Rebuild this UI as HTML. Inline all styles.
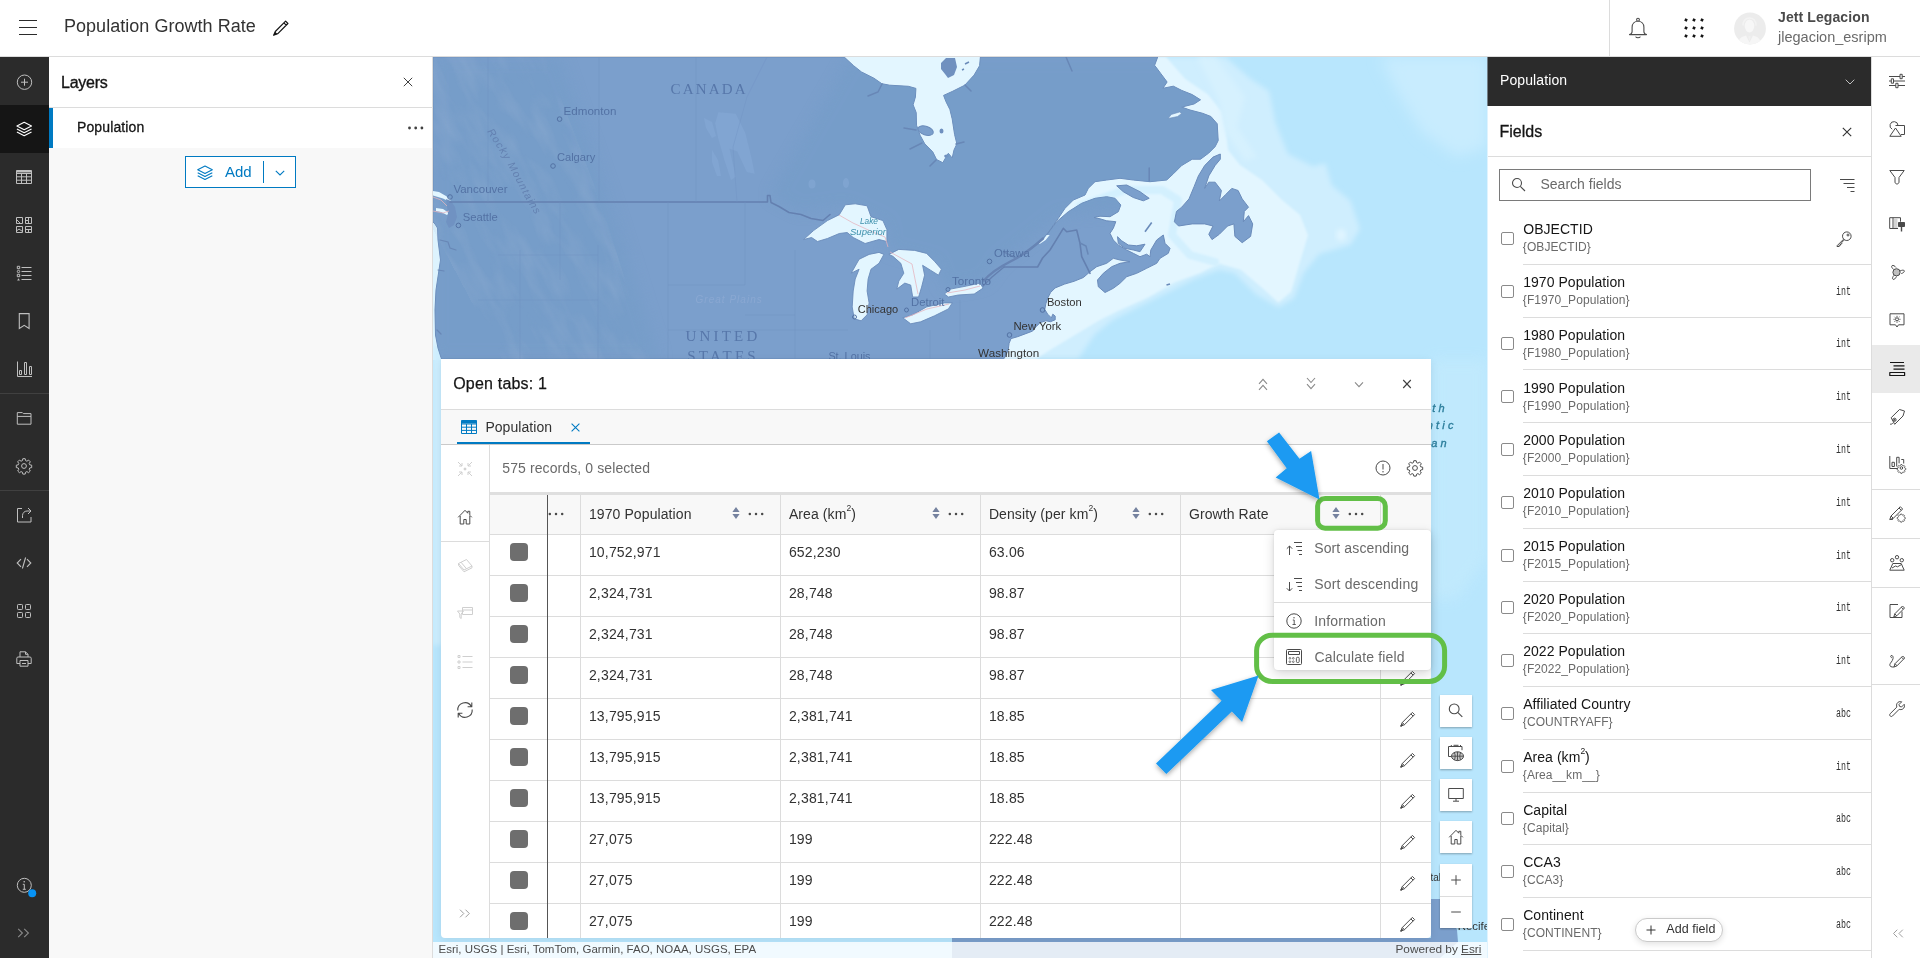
<!DOCTYPE html>
<html lang="en"><head><meta charset="utf-8"><title>Population Growth Rate</title>
<style>
*{box-sizing:border-box;margin:0;padding:0}
html,body{width:1920px;height:958px;overflow:hidden;background:#fff}
body{font-family:"Liberation Sans",sans-serif;color:#151515;font-size:14px;position:relative;will-change:transform}
.abs{position:absolute}
svg{display:block;overflow:visible}
.t{position:absolute;white-space:nowrap;line-height:1}
#hdr{position:absolute;left:0;top:0;width:1920px;height:57px;background:#fff;border-bottom:1px solid #dcdcdc}
#lrail{position:absolute;left:0;top:57px;width:49px;height:901px;background:#2b2b2b}
#lrail .act{position:absolute;left:0;top:48px;width:49px;height:48px;background:#151515}
#lrail .sep{position:absolute;left:0;width:49px;height:1px;background:#404040}
.ic{position:absolute;width:16px;height:16px}
.ic svg{width:16px;height:16px}
#layers{position:absolute;left:49px;top:57px;width:384px;height:901px;background:#f8f8f8;border-right:1px solid #dcdcdc}
#map{position:absolute;left:433px;top:57px;width:1054px;height:901px;background:#b7e4fb;overflow:hidden}
#rpanel{position:absolute;left:1487px;top:57px;width:384px;height:901px;background:#fff;overflow:hidden}
#rrail{position:absolute;left:1871px;top:57px;width:49px;height:901px;background:#fff;border-left:1px solid #dcdcdc}
#tbl{position:absolute;left:441px;top:359px;width:990px;height:579px;background:#fff;border-radius:0 0 4px 4px;overflow:hidden;box-shadow:0 2px 8px rgba(0,0,0,.08)}
</style></head><body>
<div id="hdr">
 <svg class="abs" style="left:19px;top:20px" width="18" height="15" viewBox="0 0 18 15"><path d="M0 .5h18M0 7.5h18M0 14.5h18" stroke="#2b2b2b" stroke-width="1" fill="none"/></svg>
 <div class="t" style="left:64px;top:17px;font-size:18px;color:#323232;letter-spacing:.03px">Population Growth Rate</div>
 <svg class="abs" style="left:272.500px;top:20.300px" width="16" height="16" viewBox="0 0 16 16"><path d="M.7 15.300l1.600-3.800L12.600 1.200l2.300 2.300L4.600 13.800zM10.900 2.900l2.300 2.300" fill="none" stroke="#151515" stroke-width="1.200" stroke-linejoin="round"/><path d="M.7 15.300l1.500-3.600 2.200 2.200z" fill="#151515"/></svg>
 <div class="abs" style="left:1609px;top:0;width:1px;height:56px;background:#dcdcdc"></div>
 <svg class="abs" style="left:1628px;top:17px" width="20" height="23" viewBox="0 0 20 23"><path d="M10 1.300a1.400 1.400 0 1 0 0 2.800a1.400 1.400 0 1 0 0-2.800zM1.500 17.600c1.700-.5 2.600-1.600 2.600-3.200V10.300C4.100 6.600 6.700 4.200 10 4.200s5.900 2.400 5.900 6.100v4.100c0 1.600.9 2.700 2.600 3.200zM7.900 20c.6.900 3.600.9 4.200 0" fill="none" stroke="#4a4a4a" stroke-width="1.100" stroke-linecap="round" stroke-linejoin="round"/></svg>
 <svg class="abs" style="left:1684px;top:18px" width="20" height="20" viewBox="0 0 20 20" fill="#151515"><rect x="0.6499999999999999" y="0.6499999999999999" width="2.700" height="2.700" transform="rotate(22 2 2)"/><rect x="8.65" y="0.6499999999999999" width="2.700" height="2.700" transform="rotate(22 10 2)"/><rect x="16.65" y="0.6499999999999999" width="2.700" height="2.700" transform="rotate(22 18 2)"/><rect x="0.6499999999999999" y="8.65" width="2.700" height="2.700" transform="rotate(22 2 10)"/><rect x="8.65" y="8.65" width="2.700" height="2.700" transform="rotate(22 10 10)"/><rect x="16.65" y="8.65" width="2.700" height="2.700" transform="rotate(22 18 10)"/><rect x="0.6499999999999999" y="16.65" width="2.700" height="2.700" transform="rotate(22 2 18)"/><rect x="8.65" y="16.65" width="2.700" height="2.700" transform="rotate(22 10 18)"/><rect x="16.65" y="16.65" width="2.700" height="2.700" transform="rotate(22 18 18)"/></svg>
 <svg class="abs" style="left:1733px;top:12px" width="33" height="33" viewBox="0 0 33 33"><defs><clipPath id="av"><circle cx="17" cy="16.500" r="15.900"/></clipPath></defs><circle cx="17" cy="16.500" r="15.900" fill="#ececec"/><g clip-path="url(#av)"><path d="M10 13.500c0-5 3-7.500 6.500-7.500s6.500 2.500 6.500 7.500" fill="none" stroke="#f3f3f3" stroke-width="1.600"/><ellipse cx="16.500" cy="14" rx="4.800" ry="6.500" fill="#f7f7f7"/><path d="M5 34c0-8 4-9.500 8-10.500l3.500 7 3.500-7c4 1 8 2.500 8 10.500z" fill="#f6f6f6"/><path d="M15.300 24h2.400l-1.200 6z" fill="#f0f0f0"/></g></svg>
 <div class="t" style="left:1778px;top:10px;font-size:14px;font-weight:700;color:#4a4a4a;letter-spacing:.1px">Jett Legacion</div>
 <div class="t" style="left:1778px;top:30px;font-size:14.500px;color:#6a6a6a">jlegacion_esripm</div>
</div>
<div id="lrail">
 <div class="act"></div>
 <div class="sep" style="top:336px"></div>
 <div class="sep" style="top:433px"></div>
 
 <!-- plus circle cy=81 -->
 <svg class="abs" style="left:16px;top:17px" width="16" height="16" viewBox="0 0 16 16" fill="none" stroke="#bfbfbf" stroke-width="1"><circle cx="8.500" cy="8.200" r="7.200"/><path d="M8.500 4.700v7M5 8.200h7"/></svg>
 <!-- layers cy=129 -->
 <svg class="abs" style="left:16px;top:64px" width="16" height="16" viewBox="0 0 16 16" fill="none" stroke="#fff" stroke-width="1.100" stroke-linejoin="round"><path d="M8.200 1.300L15.500 5L8.200 8.700L.9 5z"/><path d="M.9 8l7.300 3.700L15.500 8M.9 11l7.300 3.700L15.500 11"/></svg>
 <!-- table cy=177 -->
 <svg class="abs" style="left:16px;top:112px" width="16" height="16" viewBox="0 0 16 16" fill="none" stroke="#bfbfbf" stroke-width="1"><path d="M.5 1.500h15v13H.5zM.5 4.500h15M.5 7.800h15M.5 11.200h15M5.500 4.500v10M10.500 4.500v10"/><path d="M.5 2.500h15" stroke-width="2"/></svg>
 <!-- basemap cy=225 -->
 <svg class="abs" style="left:16px;top:160px" width="16" height="16" viewBox="0 0 16 16" fill="none" stroke="#bfbfbf" stroke-width="1"><path d="M.5.500h6v6h-6zM9.500.500h6v6h-6zM.5 9.500h6v6h-6zM9.500 9.500h6v6h-6z"/><path d="M.5 2.500l4 4M9.500 3.500h3v-3M12.500 3.500v3M.5 14l2.500-2 3.500 2.500M9.500 12.500h6M12.500 12.500v3"/></svg>
 <!-- legend cy=273 -->
 <svg class="abs" style="left:16px;top:208px" width="16" height="16" viewBox="0 0 16 16" fill="none" stroke="#bfbfbf" stroke-width="1"><path d="M5.500 2.500h10M5.500 6.500h10M5.500 10.500h10M5.500 14.500h10"/><path d="M1.300 1.300h2.400v2.400H1.300zM1.300 9.300h2.400v2.400H1.300z"/><circle cx="2.500" cy="6.500" r="1.200"/><path d="M2.500 13.200l1.400 2.200H1.100z" fill="#bfbfbf" stroke="none"/></svg>
 <!-- bookmark cy=321 -->
 <svg class="abs" style="left:16px;top:256px" width="16" height="16" viewBox="0 0 16 16" fill="none" stroke="#bfbfbf" stroke-width="1.100"><path d="M3.300.6h9.800v14.800L8.200 12.300 3.300 15.400z"/></svg>
 <!-- chart cy=369 -->
 <svg class="abs" style="left:16px;top:304px" width="16" height="16" viewBox="0 0 16 16" fill="none" stroke="#bfbfbf" stroke-width="1"><path d="M1.500.5v15h14.500M3.500 13.500v-4h2v4zM8.500 13.500v-12h2v12zM13.500 13.500v-8h2v8z"/></svg>
 <!-- folder cy=418 -->
 <svg class="abs" style="left:16px;top:353px" width="16" height="16" viewBox="0 0 16 16" fill="none" stroke="#bfbfbf" stroke-width="1"><path d="M1.300 14.200V2.600h5l1 1h7.700v10.600zM1.300 6.400h13.700"/></svg>
 <!-- gear cy=466 -->
 <svg class="abs" style="left:16px;top:401px" width="16" height="16" viewBox="0 0 16 16" fill="none" stroke="#bfbfbf" stroke-width="1" stroke-linejoin="round"><circle cx="8" cy="8" r="2.400"/><path d="M6.800.7h2.400l.4 1.900 1.300.6 1.700-1.100 1.700 1.700-1.100 1.700.5 1.300 2 .4v2.400l-2 .4-.5 1.300 1.100 1.700-1.700 1.700-1.700-1.100-1.300.6-.4 1.900H6.800l-.4-1.900-1.300-.6-1.700 1.100-1.700-1.700 1.100-1.700-.5-1.300-2-.4V7.200l2-.4.500-1.300-1.100-1.700 1.700-1.700 1.700 1.100 1.300-.6z"/></svg>
 <!-- share cy=515 -->
 <svg class="abs" style="left:16px;top:450px" width="16" height="16" viewBox="0 0 16 16" fill="none" stroke="#bfbfbf" stroke-width="1"><path d="M6 1.500H1.500v13.500h13.500V10M6.500 11V8.500c0-2.500 2-4.500 4.500-4.500h3.800M12 1l3 3-3 3"/></svg>
 <!-- code cy=563 -->
 <svg class="abs" style="left:16px;top:498px" width="16" height="16" viewBox="0 0 16 16" fill="none" stroke="#bfbfbf" stroke-width="1.100"><path d="M5 4.200L1.200 8 5 11.800M11 4.200L14.800 8 11 11.800M9.600 2.500L6.400 13.500"/></svg>
 <!-- apps cy=611 -->
 <svg class="abs" style="left:16px;top:546px" width="16" height="16" viewBox="0 0 16 16" fill="none" stroke="#bfbfbf" stroke-width="1"><rect x="1.500" y="1.500" width="5" height="5" rx=".8"/><rect x="9.500" y="1.500" width="5" height="5" rx=".8"/><rect x="1.500" y="9.500" width="5" height="5" rx=".8"/><rect x="9.500" y="9.500" width="5" height="5" rx=".8"/></svg>
 <!-- print cy=659 -->
 <svg class="abs" style="left:16px;top:594px" width="16" height="16" viewBox="0 0 16 16" fill="none" stroke="#bfbfbf" stroke-width="1" stroke-linejoin="round"><path d="M4 6V.8h5.500L12 3.300V6M9.500.8v2.500H12M4 12.500H.8V7.200c0-.7.500-1.200 1.200-1.200h12c.7 0 1.200.5 1.200 1.200v5.300H12M4 9.500h8v5.700H4zM6 12.500h4"/></svg>
 <!-- info cy=886 -->
 <svg class="abs" style="left:16px;top:820px" width="20" height="20" viewBox="0 0 20 20" fill="none" stroke="#bfbfbf" stroke-width="1"><circle cx="8.300" cy="8.300" r="7"/><path d="M8.300 7.300v5M6.800 7.300h1.500M6.800 12.300h3" /><circle cx="8.200" cy="4.800" r=".8" fill="#bfbfbf" stroke="none"/><circle cx="16.200" cy="16.200" r="4" fill="#0793f5" stroke="none"/></svg>
 <!-- expand cy=933 -->
 <svg class="abs" style="left:17px;top:871px" width="14" height="10" viewBox="0 0 14 10" fill="none" stroke="#8a8a8a" stroke-width="1.100"><path d="M1.200.8L5.400 5 1.200 9.200M7.200.8L11.400 5 7.200 9.200"/></svg>
</div>
<div id="layers">
 <div class="abs" style="left:0;top:0;width:383px;height:51px;background:#fff;border-bottom:1px solid #dcdcdc"></div>
 <div class="t" style="left:12px;top:18px;font-size:16px;color:#151515;-webkit-text-stroke:.35px #151515;letter-spacing:-.25px">Layers</div>
 <svg class="abs" style="left:354px;top:20px" width="10" height="10" viewBox="0 0 10 10"><path d="M.8.800l8.400 8.400M9.200.800L.8 9.200" stroke="#404040" stroke-width="1" fill="none"/></svg>
 <div class="abs" style="left:0;top:51px;width:383px;height:40px;background:#fff"></div>
 <div class="abs" style="left:0;top:51px;width:4px;height:40px;background:#007ac2"></div>
 <div class="t" style="left:28px;top:63px;font-size:14px;color:#151515;-webkit-text-stroke:.3px #151515;letter-spacing:.12px">Population</div>
 <svg class="abs" style="left:359px;top:69px" width="16" height="4" viewBox="0 0 16 4" fill="#404040"><circle cx="1.500" cy="2" r="1.400"/><circle cx="7.700" cy="2" r="1.400"/><circle cx="13.900" cy="2" r="1.400"/></svg>
 <div class="abs" style="left:136px;top:99px;width:111px;height:32px;background:#fff;border:1px solid #007ac2"></div>
 <svg class="abs" style="left:148px;top:108px" width="16" height="16" viewBox="0 0 16 16" fill="none" stroke="#007ac2" stroke-width="1.100" stroke-linejoin="round"><path d="M8 1L15.300 4.700L8 8.400L.7 4.700z"/><path d="M.7 7.700L8 11.400l7.300-3.700M.7 10.700L8 14.400l7.300-3.700"/></svg>
 <div class="t" style="left:176px;top:107px;font-size:15px;color:#007ac2">Add</div>
 <div class="abs" style="left:214px;top:104px;width:1px;height:22px;background:#007ac2"></div>
 <svg class="abs" style="left:226px;top:113px" width="10" height="6" viewBox="0 0 10 6"><path d="M.8.800L5 5 9.200.8" stroke="#007ac2" stroke-width="1.100" fill="none"/></svg>
</div>
<div id="map">
<svg width="1054" height="901" viewBox="433 57 1054 901" style="position:absolute;left:0;top:0">
<defs><filter id="b3" x="-20%" y="-20%" width="140%" height="140%"><feGaussianBlur stdDeviation="2.5"/></filter><filter id="b8" x="-30%" y="-30%" width="160%" height="160%"><feGaussianBlur stdDeviation="7"/></filter><filter id="b1" x="-10%" y="-10%" width="120%" height="120%"><feGaussianBlur stdDeviation="1.2"/></filter><path id="rocky" d="M487 131.500C500 151 511 170 519 186S533 210 540 222.500"/>
<filter id="relief" x="0" y="0" width="100%" height="100%"><feTurbulence type="fractalNoise" baseFrequency="0.02 0.06" numOctaves="3" seed="11" result="n"/><feColorMatrix in="n" type="matrix" values="0 0 0 0 0.36  0 0 0 0 0.48  0 0 0 0 0.68  1.6 0 0 0 -0.62"/></filter>
<clipPath id="landclip"><path d="M433 57 844.2 57 853.6 65.7 861.4 71.9 873.9 78.2 881.8 83.7 889.6 85.2 908.4 86.3 915.9 88.4 915.4 97 913.1 104.8 916.2 112.6 916.5 125.2 920.1 135.3 924.8 143.9 932.7 151.8 936.6 159.6 942.8 162.7 945.5 158 948.3 153.3 952.2 158 954 150 956.9 143.9 954.6 134.5 952.2 118.9 949.9 109.5 946 101.7 943.6 95.4 952.2 91.5 964.8 85.2 974.1 75.1 979.6 65.7 980.4 57 1157.7 57 1154.6 65.3 1160.9 73.7 1167.1 82 1162.9 88.3 1173.4 86.2 1181.7 90.4 1192.2 94.6 1200.5 99.8 1194.2 103.9 1181.7 107.1 1190 110 1202.6 113.3 1210.9 116.5 1217.2 123.8 1218.2 140.5 1215.1 146.7 1208.8 153 1200.5 159.2 1192.2 159.2 1181.7 165.5 1173.4 173.8 1166.7 180 1150 181.7 1133.3 180 1120 178.3 1106.7 180 1095 181.7 1088.3 188.3 1085 195 1073.3 200 1065 208.3 1058.3 218.3 1050 230 1045 236.7 1043 238.5 1046.7 235 1056.7 221.7 1068.3 211.7 1081.7 203.3 1095 198.3 1106.7 196.7 1115 198.3 1120.8 205 1118.3 211.7 1110 216.7 1100 216.2 1094 217.5 1100 218.8 1106.7 220.8 1115.8 221.7 1113.3 228.3 1110 233.3 1113.3 240 1118.3 245 1126.7 250 1133.3 253.3 1140 256.7 1146.7 254.2 1150 256.7 1150.8 250 1156.7 240 1163.3 235 1165 243.3 1170 248.3 1168.3 253.3 1160 258.3 1156.7 263.3 1146.7 268.3 1136.7 273.3 1126.7 276.7 1120 283.3 1113.3 288.3 1105 292.5 1098.3 286.7 1097.5 280 1103.3 273.3 1111.7 266.7 1120 263.3 1130 261.7 1120 260 1113.3 258.3 1106.7 263.3 1096.7 266.7 1090 271.7 1083.4 277.5 1074 281.3 1064.6 284.1 1055.2 287.9 1050.5 292.6 1047.7 298.2 1045.8 303.8 1044.8 309.5 1047.7 314.2 1051.4 317.9 1052.8 314.2 1055.2 316.1 1055.2 319.8 1050.5 321.7 1045.8 320.8 1040.2 322.6 1036.4 326.4 1032.6 331.1 1025.1 333.9 1017.6 336.7 1011 338.6 1009.1 343.3 1008.2 349.9 1005.4 356.5 1003.5 359 441.5 359 441 357.5 438 348 435.5 335 435 310 436 290 440.5 260 438 240 437.5 228 435 224 433 222z"/></clipPath></defs>
<rect x="433" y="57" width="1054" height="901" fill="#b8e6fd"/>
<path d="M1380 57h107v90l-30 10-35-25-25-40z" fill="#c8ecfe" filter="url(#b8)"/>
<path d="M1431 359h56v200l-30 40h-26z" fill="#c2eafd" filter="url(#b8)" opacity=".8"/>
<path d="M1150 57 1225.2 57 1250.3 78.8 1269.1 91.3 1275.3 122.6 1287.9 153.9 1312.9 166.5 1325.4 163.3 1331.7 185.2 1350.5 200.9 1359.9 229.1 1350.5 244.7 1319.2 254.1 1303.5 272.9 1294.1 297.9 1278.5 307.3 1256.5 294.8 1234.6 272.9 1219 269.8 1193.9 279.2 1168.9 291.7 1137.6 307.3 1112.5 319.9 1095 334 1078 359 990 359 990 57z" fill="#cfeefe" filter="url(#b3)"/>
<path d="M1150 57 1166 57 1185 78.8 1208 94.4 1222 112 1226 132 1228 150 1240 165 1262 180 1282 200 1300 215 1308 235.3 1300.4 260.4 1291 291.7 1278.5 302.6 1262.8 288.6 1240.9 269.8 1219 263.5 1200.2 272.9 1175.1 282.3 1147 297.9 1118.8 310.5 1100 319.9 1075 335 1050 350 1036 359 990 359 990 57z" fill="#e3f6ff" filter="url(#b1)"/>
<ellipse cx="1341" cy="235" rx="5" ry="6" fill="#e0f5ff" filter="url(#b3)"/>
<path d="M1080 206L1125 190 1162 190 1178 200 1172 235 1190 255 1215 262" fill="none" stroke="#d3f0fe" stroke-width="8" stroke-linecap="round" stroke-linejoin="round" filter="url(#b1)"/>
<path d="M1215 57l30 40 -8 30 20 30 -12 4 -20-30 -6-30-22-44z" fill="#d6f1fe" filter="url(#b3)"/>
<rect x="840" y="57" width="145" height="110" fill="#e3f6ff"/>
<path d="M433 180h12v180h-12z" fill="#ddf3fe"/>
<path d="M433 345h9v300h-9z" fill="#cdeefe" filter="url(#b3)"/>
<g fill="#7b9fcc" stroke="#6a8bba" stroke-width="1" stroke-linejoin="round">
<path d="M433 57 844.2 57 853.6 65.7 861.4 71.9 873.9 78.2 881.8 83.7 889.6 85.2 908.4 86.3 915.9 88.4 915.4 97 913.1 104.8 916.2 112.6 916.5 125.2 920.1 135.3 924.8 143.9 932.7 151.8 936.6 159.6 942.8 162.7 945.5 158 948.3 153.3 952.2 158 954 150 956.9 143.9 954.6 134.5 952.2 118.9 949.9 109.5 946 101.7 943.6 95.4 952.2 91.5 964.8 85.2 974.1 75.1 979.6 65.7 980.4 57 1157.7 57 1154.6 65.3 1160.9 73.7 1167.1 82 1162.9 88.3 1173.4 86.2 1181.7 90.4 1192.2 94.6 1200.5 99.8 1194.2 103.9 1181.7 107.1 1190 110 1202.6 113.3 1210.9 116.5 1217.2 123.8 1218.2 140.5 1215.1 146.7 1208.8 153 1200.5 159.2 1192.2 159.2 1181.7 165.5 1173.4 173.8 1166.7 180 1150 181.7 1133.3 180 1120 178.3 1106.7 180 1095 181.7 1088.3 188.3 1085 195 1073.3 200 1065 208.3 1058.3 218.3 1050 230 1045 236.7 1043 238.5 1046.7 235 1056.7 221.7 1068.3 211.7 1081.7 203.3 1095 198.3 1106.7 196.7 1115 198.3 1120.8 205 1118.3 211.7 1110 216.7 1100 216.2 1094 217.5 1100 218.8 1106.7 220.8 1115.8 221.7 1113.3 228.3 1110 233.3 1113.3 240 1118.3 245 1126.7 250 1133.3 253.3 1140 256.7 1146.7 254.2 1150 256.7 1150.8 250 1156.7 240 1163.3 235 1165 243.3 1170 248.3 1168.3 253.3 1160 258.3 1156.7 263.3 1146.7 268.3 1136.7 273.3 1126.7 276.7 1120 283.3 1113.3 288.3 1105 292.5 1098.3 286.7 1097.5 280 1103.3 273.3 1111.7 266.7 1120 263.3 1130 261.7 1120 260 1113.3 258.3 1106.7 263.3 1096.7 266.7 1090 271.7 1083.4 277.5 1074 281.3 1064.6 284.1 1055.2 287.9 1050.5 292.6 1047.7 298.2 1045.8 303.8 1044.8 309.5 1047.7 314.2 1051.4 317.9 1052.8 314.2 1055.2 316.1 1055.2 319.8 1050.5 321.7 1045.8 320.8 1040.2 322.6 1036.4 326.4 1032.6 331.1 1025.1 333.9 1017.6 336.7 1011 338.6 1009.1 343.3 1008.2 349.9 1005.4 356.5 1003.5 359 441.5 359 441 357.5 438 348 435.5 335 435 310 436 290 440.5 260 438 240 437.5 228 435 224 433 222z"/>
<path d="M1220.3 154 1213 157.1 1204.7 165.5 1198.4 175.9 1194.2 186.4 1189 198.9 1181.7 207.2 1176.5 211.4 1174.4 221.8 1178.6 226 1192.2 223.9 1204.7 223.9 1213 226 1208.8 234.3 1212 239.6 1219.3 234.3 1227.6 226 1233.9 223.9 1234.9 236.4 1242.2 242.7 1250.6 236.4 1252.7 223.9 1248.5 215.6 1243.3 221.8 1244.3 211.4 1248.5 207.2 1242.2 198.9 1238.1 190.5 1231.8 188.4 1225.5 194.7 1219.3 201 1221.4 190.5 1215.1 182.2 1208.8 182.2 1204.7 188.4 1208.8 175.9 1215.1 165.5 1220.3 159.2z"/>
<path d="M1116.7 185.8 1126.7 185 1140 191.7 1149.2 198.3 1143.3 200.8 1133.3 197.5 1123.3 191.7z"/>
<path d="M1117.5 236.7 1121.7 240.8 1128.3 245 1136.7 245.8 1145 244.2 1140 251.7 1133.3 250 1125 248.3 1118.3 243.3z"/>
<path d="M1145 231.700L1151.700 222.500" stroke-width="1.6"/><path d="M1166.500 285l3.500-1" stroke-width="1.6"/>
<ellipse cx="925.600" cy="130.600" rx="8" ry="4.300" transform="rotate(18 925.600 130.600)"/>
<path d="M941 63l5-5 9 0 2 9-3 8-6 3-3-4-4-5z" fill="#6f90bf" stroke="none"/><path d="M965 64l4-2M962 70l2-1" stroke-width="1.500"/>
<ellipse cx="946.500" cy="156" rx="2.400" ry="1.500" stroke="none" fill="#6f90bf"/><ellipse cx="941.500" cy="131" rx="2" ry="2.600" stroke="none" fill="#6f90bf"/>
<path d="M952 938L1431 938 1431 899 1445 899 1451 915 1457 930 1458 942 1440 958 952 958z" stroke="none"/>
</g>
<g clip-path="url(#landclip)"><path d="M850 57H1240V200L1060 215 1000 262 985 283 945 290 935 262 888 250 886 225 845 205 800 212 770 196z" fill="#739cc7" opacity=".55" filter="url(#b8)"/><path d="M433 57H560L610 200 660 359H433z" fill="#739cc7" opacity=".55" filter="url(#b8)"/></g>
<clipPath id="rk"><path d="M433 57H545L600 200 650 359H441L433 300z"/></clipPath>
<g clip-path="url(#rk)" opacity=".3"><g transform="rotate(62 520 200)"><rect x="250" y="-40" width="560" height="330" filter="url(#relief)"/></g></g>
<g fill="#86a9d6" stroke="none" opacity=".6"><path d="M718.400 112.200L735.700 113.800 745.200 132.700 751.500 157.900 754.700 173.700 746.800 172.100 737.300 151.600 729.400 148.500 735.700 176.800 731 180 724.700 161.100 718.400 139 715.200 123.200z"/><path d="M704 118l8 4 4 14-4 2-6-10z"/><path d="M712 150l6 10 3 16-4 0-5-14z"/><ellipse cx="812" cy="184" rx="3.500" ry="4.500"/><ellipse cx="846" cy="183" rx="3" ry="5"/></g>
<path d="M1168.200 118.500l3-4 8.400-2.500 2 1.500-4 3z" fill="#e3f6ff" stroke="#6a8bba" stroke-width=".6"/>
<g fill="#e3f6ff" stroke="#6a8bba" stroke-width=".9" stroke-linejoin="round">
<path d="M803.6 239.5 813.5 230.6 827.4 220.6 839.3 214.7 845.3 204.8 855.2 203.8 867.1 205.8 871 216.7 882.9 220.6 886.9 229.6 886.9 241.5 879 239.5 865.1 243.5 853.2 237.5 847.2 232.5 839.3 233.5 827.4 238.5 817.5 241.5 811.6 237.5z"/>
<path d="M879 252.4 883.9 254.4 879 263.3 871 269.2 868.1 279.1 867.1 291 869.1 302.9 867.1 314.8 861.1 320.8 854.2 318.8 852.2 306.9 853.2 291 855.2 279.1 859.1 269.2 851.2 273.2 859.1 259.3 869.1 254.4z"/>
<path d="M888.9 254.4 898.8 249.4 914.7 250.4 926.6 253.4 934.5 261.3 941.4 269.2 938.5 275.2 930.5 270.2 922.6 265.3 924.6 275.2 921.6 287.1 918.6 297 912.7 297 910.7 285.1 904.8 283.1 896.8 289.1 898.8 281.1 903.8 273.2 900.8 263.3 892.9 256.3z"/>
<path d="M902.8 317.8 912.7 314.8 926.6 306.9 944.4 302.9 952.3 302.9 948.4 308.9 934.5 315.8 920.6 321.8 910.7 323.8z"/>
<path d="M944.4 294 950.4 289.1 966.2 286.1 980.1 283.1 983.1 288.1 974.2 294 958.3 295 948.4 297z"/>
<path d="M433 191l6 1 7 4 5 4-2 1.500-6-3-10-3zM436 208l7 1 6 4-2 2-6-3-5-1z" stroke="none"/>
<path d="M446 199l5 2 4 6 2 10-3 8-5 3-3-6 2-8-1-8z" fill="#7092c2" stroke="none"/>
<path d="M1046.700 235l-3 4-5 4 1 1 6-4 4-5z" stroke="none"/>
</g>
<g fill="none" stroke="#6480b0" stroke-width="1.600" stroke-linejoin="round" stroke-linecap="round">
<path d="M450 202H767.500V195.500l2.500 0 1 7 8 4 10 6 12 2 10 4 12 2 7-6"/>
<path d="M1004 267h33.600l5-9 7.400-8 8.300-13.300 5-8.400 3.400 3.400 10-1.700 3.300 13.300 1.700 13.400 5 10 3.300 6.600"/>
<path d="M1043 238.500c-9 8-18 15-27 20s-22 10-32 22" stroke-width="2.400" stroke="#6784b4"/>
<path d="M1004 267l-12 10-9 9" stroke-width="1.400"/>
</g>
<g fill="none" stroke="#e6b3bd" stroke-width=".8" opacity=".95"><path d="M839 215l14 8 22 10 10 4 3 10"/><path d="M890 252l22 12 6 30"/><path d="M905 318l22-9 22-5"/><path d="M947 293l18-3 15-4"/><path d="M433 197l8 3 6 6M433 211l10 2 6-2"/></g>
<g fill="none" stroke="#6887b6" stroke-width="1.500" stroke-linecap="round"><path d="M882 84l-4 8-10 4M916 130l-12-2M922 143l-12 6M936 160l-6 6M956 144l8-2M965 85l6 6M1066 57l6 14M1149.200 181l0-13M1016 258l-12-6M1080 243l6 3 2 8"/><path d="M440 240l8 2 2 6 6 2M438 270l6 1M437 330l4 4" stroke-width="1.200"/></g>
<g fill="none" stroke="#7092c2" stroke-width=".6" opacity=".7"><path d="M488 57V202M599 57V202M696 57V202M767 57l-20 40-14 50 4 55M520 250V359M560 202V280M598 245V359M668 202V359M745 202V285M745 285h-77M745 315h50M498 255h100M478 300h120M795 250v109M668 330h180M930 330v29M960 300v40"/></g>
<g font-family="Liberation Serif,serif" fill="#5777aa" font-size="15">
<text x="670.5" y="94.3" textLength="75.1" lengthAdjust="spacing">CANADA</text>
<text x="685.5" y="340.6" textLength="71.8" lengthAdjust="spacing">UNITED</text>
<text x="687.2" y="360.6" textLength="68.5" lengthAdjust="spacing">STATES</text>
</g>
<g font-family="Liberation Sans,sans-serif" font-size="10.500" fill="#5372a4">
<text x="563.6" y="114.5" textLength="52.8" lengthAdjust="spacingAndGlyphs">Edmonton</text>
<text x="556.9" y="160.7" textLength="38.4" lengthAdjust="spacingAndGlyphs">Calgary</text>
<text x="453.4" y="192.6" textLength="54.1" lengthAdjust="spacingAndGlyphs">Vancouver</text>
<text x="462.7" y="221" textLength="35.1" lengthAdjust="spacingAndGlyphs">Seattle</text>
<text x="994" y="256.7" textLength="35.7" lengthAdjust="spacingAndGlyphs">Ottawa</text>
<text x="952" y="284.7" textLength="39" lengthAdjust="spacingAndGlyphs">Toronto</text>
<text x="911.1" y="305.5" textLength="33.3" lengthAdjust="spacingAndGlyphs">Detroit</text>
<text x="828.4" y="360.3" textLength="42.1" lengthAdjust="spacingAndGlyphs">St. Louis</text>
<g fill="none" stroke="#5372a4" stroke-width="1"><circle cx="559.600" cy="119.100" r="2.300"/><circle cx="553" cy="166" r="2.300"/><circle cx="450" cy="197" r="2.300"/><circle cx="458.400" cy="225.400" r="2.300"/><circle cx="989.500" cy="261.400" r="2.300"/><circle cx="948" cy="289.500" r="2"/><circle cx="906.500" cy="310" r="2"/><circle cx="854.500" cy="317" r="2"/><circle cx="1042.500" cy="310" r="2.300"/><circle cx="1009.500" cy="335" r="2.300"/></g>
</g>
<g font-family="Liberation Sans,sans-serif" font-size="10.500" fill="#333">
<text x="857.8" y="312.5" textLength="40.4" lengthAdjust="spacingAndGlyphs">Chicago</text>
<text x="1046.9" y="305.5" textLength="34.8" lengthAdjust="spacingAndGlyphs">Boston</text>
<text x="1013.4" y="330.2" textLength="47.9" lengthAdjust="spacingAndGlyphs">New York</text>
<text x="978.1" y="357.1" textLength="61.1" lengthAdjust="spacingAndGlyphs">Washington</text>
<text x="1457.7" y="930" textLength="32.3" lengthAdjust="spacingAndGlyphs">Recife</text>
<text x="1418" y="881" textLength="23" lengthAdjust="spacingAndGlyphs">Natal</text>
</g>
<g font-family="Liberation Sans,sans-serif" font-style="italic">
<text font-size="10.500" fill="#6381b1" letter-spacing="1.100"><textPath href="#rocky">Rocky Mountains</textPath></text>
<text x="695.5" y="303" textLength="66.2" lengthAdjust="spacing" font-size="10" fill="#8aa8d2">Great Plains</text>
<text x="860" y="224.3" textLength="18" lengthAdjust="spacingAndGlyphs" font-size="9" fill="#3c8fab">Lake</text>
<text x="850" y="235" textLength="36" lengthAdjust="spacingAndGlyphs" font-size="9" fill="#3c8fab">Superior</text>
<g font-size="11" fill="#2c7e9c" stroke="#2c7e9c" stroke-width=".35" letter-spacing="3.200"><text x="1405" y="411.600">North</text><text x="1395" y="429.300">Atlantic</text><text x="1401.500" y="446.600">Ocean</text></g>
</g>
</svg></div>
<div id="tbl">
<div class="t" style="left:12.2px;top:16.6px;font-size:16px;color:#151515;-webkit-text-stroke:.25px #151515;letter-spacing:.2px">Open tabs: 1</div>
<svg class="abs" style="left:816px;top:18px" width="12" height="14" viewBox="0 0 12 14"><path d="M2 6.800L6 2.300 10 6.800M2 12.800L6 8.300 10 12.800" fill="none" stroke="#8a8a8a" stroke-width="1.100"/></svg>
<svg class="abs" style="left:864px;top:18px" width="12" height="14" viewBox="0 0 12 14"><path d="M2 1L6 5.500 10 1M2 7.200L6 11.700 10 7.200" fill="none" stroke="#8a8a8a" stroke-width="1.100"/></svg>
<svg class="abs" style="left:912px;top:18px" width="12" height="14" viewBox="0 0 12 14"><path d="M2 5.300L6 9.600 10 5.300" fill="none" stroke="#8a8a8a" stroke-width="1.100"/></svg>
<svg class="abs" style="left:960.1px;top:18px" width="12" height="14" viewBox="0 0 12 14"><path d="M2.200 3L9.800 11M9.800 3L2.200 11" fill="none" stroke="#404040" stroke-width="1.100"/></svg>
<div class="abs" style="left:0;top:50px;width:990px;height:1px;background:#dcdcdc"></div>
<div class="abs" style="left:0;top:51px;width:990px;height:34px;background:#f8f8f8"></div>
<div class="abs" style="left:0;top:85px;width:990px;height:1px;background:#cacaca"></div>
<div class="abs" style="left:16px;top:83px;width:133px;height:2px;background:#007ac2"></div>
<svg class="abs" style="left:20px;top:61px" width="16" height="14" viewBox="0 0 16 14" fill="none" stroke="#007ac2" stroke-width="1"><path d="M.5.500h15v13H.5zM.5 4h15M.5 7.200h15M.5 10.400h15M5.500 4v9.500M10.500 4v9.500"/><path d="M.5 2h15" stroke-width="3"/></svg>
<div class="t" style="left:44.4px;top:61.3px;font-size:14px;color:#323232;letter-spacing:.05px">Population</div>
<svg class="abs" style="left:129.5px;top:63.5px" width="9" height="9" viewBox="0 0 9 9"><path d="M.6.600l7.800 7.800M8.400.600L.6 8.400" stroke="#007ac2" stroke-width="1.100" fill="none"/></svg>
<div class="abs" style="left:48px;top:86px;width:1px;height:500px;background:#dcdcdc"></div>
<div class="abs" style="left:0;top:182px;width:48px;height:1px;background:#dcdcdc"></div>
<svg class="abs" style="left:16px;top:101.5px" width="16" height="16" viewBox="0 0 16 16" fill="none" stroke="#cfcfcf" stroke-width="1" stroke-linejoin="round"><path d="M1 1l4 4M5 2v3H2M15 1l-4 4M11 2v3h3M1 15l4-4M5 14v-3H2M15 15l-4-4M11 14v-3h3"/><circle cx="8" cy="8" r="1" fill="#cfcfcf"/></svg>
<svg class="abs" style="left:16px;top:149.5px" width="16" height="16" viewBox="0 0 16 16" fill="none" stroke="#4a4a4a" stroke-width="1" stroke-linejoin="round"><path d="M1.200 8.300L8 1.300l2.800 2.900V2.300h2v4l2 2M3.200 7v8h3.600v-4.500h2.400V15h3.600V7"/></svg>
<svg class="abs" style="left:16px;top:198px" width="16" height="16" viewBox="0 0 16 16" fill="none" stroke="#cfcfcf" stroke-width="1" stroke-linejoin="round"><path d="M1.500 6.500l8-4 5.500 6.500-8 4zM1.500 6.500v1.800L7 14.800l8-4V9M4 5.200l5.500 6.600"/></svg>
<svg class="abs" style="left:16px;top:245.5px" width="16" height="16" viewBox="0 0 16 16" fill="none" stroke="#cfcfcf" stroke-width="1" stroke-linejoin="round"><path d="M5.500 2.500h10v7h-10zM5.500 5h10M.5 6h6l-2.300 3v4.500l-1.400-1V9z"/></svg>
<svg class="abs" style="left:16px;top:295px" width="16" height="16" viewBox="0 0 16 16" fill="none" stroke="#cfcfcf" stroke-width="1" stroke-linejoin="round"><path d="M5.500 2.500h10M5.500 8h10M5.500 13.500h10M1 1.500h2v2H1zM1 7h2v2H1zM1 12.500h2v2H1z"/></svg>
<svg class="abs" style="left:15.3px;top:342.2px" width="18" height="18" viewBox="0 0 18 18" fill="none" stroke="#4a4a4a" stroke-width="1.100" stroke-linejoin="round"><path d="M1.800 9.500A7.200 7.200 0 0 1 15.300 5.500M16.200 8.500A7.200 7.200 0 0 1 2.700 12.500M15.800 1.500v4.200h-4.200M2.200 16.500v-4.200h4.200"/></svg>
<svg class="abs" style="left:18px;top:550px" width="12" height="9" viewBox="0 0 12 9" fill="none" stroke="#9f9f9f" stroke-width="1"><path d="M1 .7L4.800 4.500 1 8.300M6.500.700L10.300 4.500 6.500 8.300"/></svg>
<div class="t" style="left:61.3px;top:101.6px;font-size:14px;color:#6a6a6a;letter-spacing:.1px">575 records, 0 selected</div>
<svg class="abs" style="left:934px;top:101px" width="16" height="16" viewBox="0 0 16 16" fill="none" stroke="#4a4a4a" stroke-width="1" stroke-linejoin="round"><circle cx="8" cy="8" r="7"/><path d="M8 4v5.500"/><circle cx="8" cy="11.700" r=".7" fill="#4a4a4a" stroke="none"/></svg>
<svg class="abs" style="left:965.5px;top:101px" width="16" height="16" viewBox="0 0 16 16" fill="none" stroke="#4a4a4a" stroke-width="1" stroke-linejoin="round"><circle cx="8" cy="8" r="2.400"/><path d="M6.800.700h2.400l.4 1.900 1.300.6 1.700-1.100 1.700 1.700-1.100 1.700.5 1.300 2 .4v2.400l-2 .4-.5 1.300 1.100 1.700-1.700 1.700-1.700-1.100-1.300.6-.4 1.900H6.800l-.4-1.900-1.300-.6-1.700 1.100-1.700-1.700 1.100-1.700-.5-1.300-2-.4V7.200l2-.4.500-1.300-1.100-1.700 1.700-1.700 1.700 1.100 1.300-.6z"/></svg>
<div class="abs" style="left:49px;top:133px;width:941px;height:3px;background:#dfdfdf"></div>
<div class="abs" style="left:49px;top:136px;width:941px;height:39px;background:#f8f8f8"></div>
<div class="abs" style="left:49px;top:175px;width:941px;height:1px;background:#dcdcdc"></div>
<div class="abs" style="left:49px;top:216px;width:941px;height:1px;background:#dcdcdc"></div>
<div class="abs" style="left:49px;top:257px;width:941px;height:1px;background:#dcdcdc"></div>
<div class="abs" style="left:49px;top:298px;width:941px;height:1px;background:#dcdcdc"></div>
<div class="abs" style="left:49px;top:339px;width:941px;height:1px;background:#dcdcdc"></div>
<div class="abs" style="left:49px;top:380px;width:941px;height:1px;background:#dcdcdc"></div>
<div class="abs" style="left:49px;top:421px;width:941px;height:1px;background:#dcdcdc"></div>
<div class="abs" style="left:49px;top:462px;width:941px;height:1px;background:#dcdcdc"></div>
<div class="abs" style="left:49px;top:503px;width:941px;height:1px;background:#dcdcdc"></div>
<div class="abs" style="left:49px;top:544px;width:941px;height:1px;background:#dcdcdc"></div>
<div class="abs" style="left:49px;top:585px;width:941px;height:1px;background:#dcdcdc"></div>
<div class="abs" style="left:139px;top:136px;width:1px;height:450px;background:#dcdcdc"></div>
<div class="abs" style="left:339px;top:136px;width:1px;height:450px;background:#dcdcdc"></div>
<div class="abs" style="left:539px;top:136px;width:1px;height:450px;background:#dcdcdc"></div>
<div class="abs" style="left:739px;top:136px;width:1px;height:450px;background:#dcdcdc"></div>
<div class="abs" style="left:939px;top:136px;width:1px;height:450px;background:#dcdcdc"></div>
<div class="abs" style="left:106px;top:136px;width:1px;height:450px;background:#555"></div>
<svg class="abs" style="left:107px;top:152.7px" width="16" height="4" viewBox="0 0 16 4" fill="#4a4a4a"><circle cx="1.800" cy="2" r="1.250"/><circle cx="8" cy="2" r="1.250"/><circle cx="14.200" cy="2" r="1.250"/></svg>
<div class="t" style="left:147.9px;top:147.8px;font-size:14px;color:#323232;letter-spacing:.1px">1970 Population</div>
<svg class="abs" style="left:290.5px;top:148.2px" width="8" height="12" viewBox="0 0 8 12" fill="#75829f"><path d="M4 0L7.600 5H.4zM4 12L.4 7h7.200z"/></svg>
<svg class="abs" style="left:307px;top:152.7px" width="16" height="4" viewBox="0 0 16 4" fill="#4a4a4a"><circle cx="1.800" cy="2" r="1.250"/><circle cx="8" cy="2" r="1.250"/><circle cx="14.200" cy="2" r="1.250"/></svg>
<div class="t" style="left:347.9px;top:147.8px;font-size:14px;color:#323232;letter-spacing:.1px">Area (km<span style="font-size:8.500px;position:relative;top:-8px;line-height:0;letter-spacing:0">2</span>)</div>
<svg class="abs" style="left:490.5px;top:148.2px" width="8" height="12" viewBox="0 0 8 12" fill="#75829f"><path d="M4 0L7.600 5H.4zM4 12L.4 7h7.200z"/></svg>
<svg class="abs" style="left:507px;top:152.7px" width="16" height="4" viewBox="0 0 16 4" fill="#4a4a4a"><circle cx="1.800" cy="2" r="1.250"/><circle cx="8" cy="2" r="1.250"/><circle cx="14.200" cy="2" r="1.250"/></svg>
<div class="t" style="left:547.9px;top:147.8px;font-size:14px;color:#323232;letter-spacing:.1px">Density (per km<span style="font-size:8.500px;position:relative;top:-8px;line-height:0;letter-spacing:0">2</span>)</div>
<svg class="abs" style="left:690.5px;top:148.2px" width="8" height="12" viewBox="0 0 8 12" fill="#75829f"><path d="M4 0L7.600 5H.4zM4 12L.4 7h7.200z"/></svg>
<svg class="abs" style="left:707px;top:152.7px" width="16" height="4" viewBox="0 0 16 4" fill="#4a4a4a"><circle cx="1.800" cy="2" r="1.250"/><circle cx="8" cy="2" r="1.250"/><circle cx="14.200" cy="2" r="1.250"/></svg>
<div class="t" style="left:747.9px;top:147.8px;font-size:14px;color:#323232;letter-spacing:.1px">Growth Rate</div>
<svg class="abs" style="left:890.5px;top:148.2px" width="8" height="12" viewBox="0 0 8 12" fill="#75829f"><path d="M4 0L7.600 5H.4zM4 12L.4 7h7.200z"/></svg>
<svg class="abs" style="left:907px;top:152.7px" width="16" height="4" viewBox="0 0 16 4" fill="#4a4a4a"><circle cx="1.800" cy="2" r="1.250"/><circle cx="8" cy="2" r="1.250"/><circle cx="14.200" cy="2" r="1.250"/></svg>
<div class="abs" style="left:69px;top:184px;width:18px;height:18px;border-radius:4px;background:#6e6e6e"></div>
<div class="t" style="left:147.9px;top:186.4px;font-size:14px;color:#323232;letter-spacing:.18px">10,752,971</div>
<div class="t" style="left:347.9px;top:186.4px;font-size:14px;color:#323232;letter-spacing:.18px">652,230</div>
<div class="t" style="left:547.9px;top:186.4px;font-size:14px;color:#323232;letter-spacing:.18px">63.06</div>
<div class="abs" style="left:69px;top:225px;width:18px;height:18px;border-radius:4px;background:#6e6e6e"></div>
<div class="t" style="left:147.9px;top:227.4px;font-size:14px;color:#323232;letter-spacing:.18px">2,324,731</div>
<div class="t" style="left:347.9px;top:227.4px;font-size:14px;color:#323232;letter-spacing:.18px">28,748</div>
<div class="t" style="left:547.9px;top:227.4px;font-size:14px;color:#323232;letter-spacing:.18px">98.87</div>
<div class="abs" style="left:69px;top:266px;width:18px;height:18px;border-radius:4px;background:#6e6e6e"></div>
<div class="t" style="left:147.9px;top:268.4px;font-size:14px;color:#323232;letter-spacing:.18px">2,324,731</div>
<div class="t" style="left:347.9px;top:268.4px;font-size:14px;color:#323232;letter-spacing:.18px">28,748</div>
<div class="t" style="left:547.9px;top:268.4px;font-size:14px;color:#323232;letter-spacing:.18px">98.87</div>
<div class="abs" style="left:69px;top:307px;width:18px;height:18px;border-radius:4px;background:#6e6e6e"></div>
<div class="t" style="left:147.9px;top:309.4px;font-size:14px;color:#323232;letter-spacing:.18px">2,324,731</div>
<div class="t" style="left:347.9px;top:309.4px;font-size:14px;color:#323232;letter-spacing:.18px">28,748</div>
<div class="t" style="left:547.9px;top:309.4px;font-size:14px;color:#323232;letter-spacing:.18px">98.87</div>
<svg class="abs" style="left:958.6px;top:311.2px" width="16" height="16" viewBox="0 0 16 16" fill="none" stroke="#4a4a4a" stroke-width="1" stroke-linejoin="round"><path d="M.8 15.200l1.500-3.700L12.400 1.400l2.200 2.200L4.500 13.700zM2.300 11.500l2.200 2.200M10.900 2.900l2.200 2.200"/><path d="M.8 15.200l.9-2.200 1.300 1.300z" fill="#4a4a4a"/></svg>
<div class="abs" style="left:69px;top:348px;width:18px;height:18px;border-radius:4px;background:#6e6e6e"></div>
<div class="t" style="left:147.9px;top:350.4px;font-size:14px;color:#323232;letter-spacing:.18px">13,795,915</div>
<div class="t" style="left:347.9px;top:350.4px;font-size:14px;color:#323232;letter-spacing:.18px">2,381,741</div>
<div class="t" style="left:547.9px;top:350.4px;font-size:14px;color:#323232;letter-spacing:.18px">18.85</div>
<svg class="abs" style="left:958.6px;top:352.2px" width="16" height="16" viewBox="0 0 16 16" fill="none" stroke="#4a4a4a" stroke-width="1" stroke-linejoin="round"><path d="M.8 15.200l1.500-3.700L12.400 1.400l2.200 2.200L4.500 13.700zM2.300 11.500l2.200 2.200M10.900 2.900l2.200 2.200"/><path d="M.8 15.200l.9-2.200 1.300 1.300z" fill="#4a4a4a"/></svg>
<div class="abs" style="left:69px;top:389px;width:18px;height:18px;border-radius:4px;background:#6e6e6e"></div>
<div class="t" style="left:147.9px;top:391.4px;font-size:14px;color:#323232;letter-spacing:.18px">13,795,915</div>
<div class="t" style="left:347.9px;top:391.4px;font-size:14px;color:#323232;letter-spacing:.18px">2,381,741</div>
<div class="t" style="left:547.9px;top:391.4px;font-size:14px;color:#323232;letter-spacing:.18px">18.85</div>
<svg class="abs" style="left:958.6px;top:393.2px" width="16" height="16" viewBox="0 0 16 16" fill="none" stroke="#4a4a4a" stroke-width="1" stroke-linejoin="round"><path d="M.8 15.200l1.500-3.700L12.400 1.400l2.200 2.200L4.500 13.700zM2.300 11.500l2.200 2.200M10.900 2.900l2.200 2.200"/><path d="M.8 15.200l.9-2.200 1.300 1.300z" fill="#4a4a4a"/></svg>
<div class="abs" style="left:69px;top:430px;width:18px;height:18px;border-radius:4px;background:#6e6e6e"></div>
<div class="t" style="left:147.9px;top:432.4px;font-size:14px;color:#323232;letter-spacing:.18px">13,795,915</div>
<div class="t" style="left:347.9px;top:432.4px;font-size:14px;color:#323232;letter-spacing:.18px">2,381,741</div>
<div class="t" style="left:547.9px;top:432.4px;font-size:14px;color:#323232;letter-spacing:.18px">18.85</div>
<svg class="abs" style="left:958.6px;top:434.2px" width="16" height="16" viewBox="0 0 16 16" fill="none" stroke="#4a4a4a" stroke-width="1" stroke-linejoin="round"><path d="M.8 15.200l1.500-3.700L12.400 1.400l2.200 2.200L4.500 13.700zM2.300 11.500l2.200 2.200M10.900 2.900l2.200 2.200"/><path d="M.8 15.200l.9-2.200 1.300 1.300z" fill="#4a4a4a"/></svg>
<div class="abs" style="left:69px;top:471px;width:18px;height:18px;border-radius:4px;background:#6e6e6e"></div>
<div class="t" style="left:147.9px;top:473.4px;font-size:14px;color:#323232;letter-spacing:.18px">27,075</div>
<div class="t" style="left:347.9px;top:473.4px;font-size:14px;color:#323232;letter-spacing:.18px">199</div>
<div class="t" style="left:547.9px;top:473.4px;font-size:14px;color:#323232;letter-spacing:.18px">222.48</div>
<svg class="abs" style="left:958.6px;top:475.2px" width="16" height="16" viewBox="0 0 16 16" fill="none" stroke="#4a4a4a" stroke-width="1" stroke-linejoin="round"><path d="M.8 15.200l1.500-3.700L12.400 1.400l2.200 2.200L4.500 13.700zM2.300 11.500l2.200 2.200M10.900 2.900l2.200 2.200"/><path d="M.8 15.200l.9-2.200 1.300 1.300z" fill="#4a4a4a"/></svg>
<div class="abs" style="left:69px;top:512px;width:18px;height:18px;border-radius:4px;background:#6e6e6e"></div>
<div class="t" style="left:147.9px;top:514.4px;font-size:14px;color:#323232;letter-spacing:.18px">27,075</div>
<div class="t" style="left:347.9px;top:514.4px;font-size:14px;color:#323232;letter-spacing:.18px">199</div>
<div class="t" style="left:547.9px;top:514.4px;font-size:14px;color:#323232;letter-spacing:.18px">222.48</div>
<svg class="abs" style="left:958.6px;top:516.2px" width="16" height="16" viewBox="0 0 16 16" fill="none" stroke="#4a4a4a" stroke-width="1" stroke-linejoin="round"><path d="M.8 15.200l1.500-3.700L12.400 1.400l2.200 2.200L4.500 13.700zM2.300 11.500l2.200 2.200M10.900 2.900l2.200 2.200"/><path d="M.8 15.200l.9-2.200 1.300 1.300z" fill="#4a4a4a"/></svg>
<div class="abs" style="left:69px;top:553px;width:18px;height:18px;border-radius:4px;background:#6e6e6e"></div>
<div class="t" style="left:147.9px;top:555.4px;font-size:14px;color:#323232;letter-spacing:.18px">27,075</div>
<div class="t" style="left:347.9px;top:555.4px;font-size:14px;color:#323232;letter-spacing:.18px">199</div>
<div class="t" style="left:547.9px;top:555.4px;font-size:14px;color:#323232;letter-spacing:.18px">222.48</div>
<svg class="abs" style="left:958.6px;top:557.2px" width="16" height="16" viewBox="0 0 16 16" fill="none" stroke="#4a4a4a" stroke-width="1" stroke-linejoin="round"><path d="M.8 15.200l1.500-3.700L12.400 1.400l2.200 2.200L4.500 13.700zM2.300 11.500l2.200 2.200M10.900 2.900l2.200 2.200"/><path d="M.8 15.200l.9-2.200 1.300 1.300z" fill="#4a4a4a"/></svg>
</div>
<div id="rpanel">
<div class="abs" style="left:0;top:0;width:1px;height:901px;background:#dff3fe"></div>
<div class="abs" style="left:0;top:0;width:1px;height:48.500px;background:#737f88"></div>
<div class="abs" style="left:1px;top:0;width:383px;height:48.500px;background:#2b2b2b"></div>
<div class="t" style="left:13px;top:16.2px;font-size:14px;color:#fff;letter-spacing:.1px">Population</div>
<svg class="abs" style="left:357.5px;top:21.5px" width="10" height="6" viewBox="0 0 10 6"><path d="M.7.700L5 5 9.300.7" stroke="#bfbfbf" stroke-width="1" fill="none"/></svg>
<div class="t" style="left:12.5px;top:66.7px;font-size:16px;color:#151515;-webkit-text-stroke:.3px #151515">Fields</div>
<svg class="abs" style="left:355px;top:69.5px" width="10" height="10" viewBox="0 0 10 10"><path d="M.8.800l8.400 8.400M9.200.800L.8 9.200" stroke="#323232" stroke-width="1.100" fill="none"/></svg>
<div class="abs" style="left:1px;top:99px;width:383px;height:1px;background:#dcdcdc"></div>
<div class="abs" style="left:12px;top:112px;width:312px;height:32px;border:1px solid #7a7a7a;background:#fff"></div>
<svg class="abs" style="left:24px;top:120px" width="16" height="16" viewBox="0 0 16 16" fill="none" stroke="#4a4a4a" stroke-width="1.100"><circle cx="6" cy="6" r="4.500"/><path d="M9.300 9.300l4.700 4.700"/></svg>
<div class="t" style="left:53.5px;top:120.3px;font-size:14px;color:#6a6a6a">Search fields</div>
<svg class="abs" style="left:353px;top:121px" width="15" height="15" viewBox="0 0 15 15" fill="none" stroke="#4a4a4a" stroke-width="1"><path d="M0 1.500h14.500M3.500 5.500h11M7 9.500h7.500M10.500 13.500h4"/></svg>
<div class="abs" style="left:14px;top:174.95px;width:13px;height:13px;border:1px solid #8a8a8a;border-radius:2px;background:#fff"></div>
<div class="t" style="left:36.2px;top:165.25px;font-size:14px;color:#151515;letter-spacing:.05px">OBJECTID</div>
<div class="t" style="left:35.8px;top:184.25px;font-size:12px;color:#6a6a6a;letter-spacing:.08px">{OBJECTID}</div>
<svg class="abs" style="left:348.5px;top:173.65px" width="16" height="16" viewBox="0 0 16 16" fill="none" stroke="#4a4a4a" stroke-width="1" stroke-linejoin="round"><circle cx="10.800" cy="5.200" r="4.300"/><circle cx="12" cy="4" r="1"/><path d="M7.600 8.200L1 14.800v.7h2.200v-1.300h1.300v-1.300h1.300v-1.500l2.300-2.300"/></svg>
<div class="abs" style="left:36px;top:206.92px;width:348px;height:1px;background:#dcdcdc"></div>
<div class="abs" style="left:14px;top:227.72px;width:13px;height:13px;border:1px solid #8a8a8a;border-radius:2px;background:#fff"></div>
<div class="t" style="left:36.2px;top:218.02px;font-size:14px;color:#151515;letter-spacing:.05px">1970 Population</div>
<div class="t" style="left:35.8px;top:237.02px;font-size:12px;color:#6a6a6a;letter-spacing:.08px">{F1970_Population}</div>
<div class="t" style="left:349px;top:228.72px;font-family:'Liberation Mono',monospace;font-size:12.500px;color:#323232;transform:scaleX(.665);transform-origin:0 0">int</div>
<div class="abs" style="left:36px;top:259.69px;width:348px;height:1px;background:#dcdcdc"></div>
<div class="abs" style="left:14px;top:280.49px;width:13px;height:13px;border:1px solid #8a8a8a;border-radius:2px;background:#fff"></div>
<div class="t" style="left:36.2px;top:270.79px;font-size:14px;color:#151515;letter-spacing:.05px">1980 Population</div>
<div class="t" style="left:35.8px;top:289.79px;font-size:12px;color:#6a6a6a;letter-spacing:.08px">{F1980_Population}</div>
<div class="t" style="left:349px;top:281.49px;font-family:'Liberation Mono',monospace;font-size:12.500px;color:#323232;transform:scaleX(.665);transform-origin:0 0">int</div>
<div class="abs" style="left:36px;top:312.46px;width:348px;height:1px;background:#dcdcdc"></div>
<div class="abs" style="left:14px;top:333.26px;width:13px;height:13px;border:1px solid #8a8a8a;border-radius:2px;background:#fff"></div>
<div class="t" style="left:36.2px;top:323.56px;font-size:14px;color:#151515;letter-spacing:.05px">1990 Population</div>
<div class="t" style="left:35.8px;top:342.56px;font-size:12px;color:#6a6a6a;letter-spacing:.08px">{F1990_Population}</div>
<div class="t" style="left:349px;top:334.26px;font-family:'Liberation Mono',monospace;font-size:12.500px;color:#323232;transform:scaleX(.665);transform-origin:0 0">int</div>
<div class="abs" style="left:36px;top:365.23px;width:348px;height:1px;background:#dcdcdc"></div>
<div class="abs" style="left:14px;top:386.03px;width:13px;height:13px;border:1px solid #8a8a8a;border-radius:2px;background:#fff"></div>
<div class="t" style="left:36.2px;top:376.33px;font-size:14px;color:#151515;letter-spacing:.05px">2000 Population</div>
<div class="t" style="left:35.8px;top:395.33px;font-size:12px;color:#6a6a6a;letter-spacing:.08px">{F2000_Population}</div>
<div class="t" style="left:349px;top:387.03px;font-family:'Liberation Mono',monospace;font-size:12.500px;color:#323232;transform:scaleX(.665);transform-origin:0 0">int</div>
<div class="abs" style="left:36px;top:418.0px;width:348px;height:1px;background:#dcdcdc"></div>
<div class="abs" style="left:14px;top:438.8px;width:13px;height:13px;border:1px solid #8a8a8a;border-radius:2px;background:#fff"></div>
<div class="t" style="left:36.2px;top:429.1px;font-size:14px;color:#151515;letter-spacing:.05px">2010 Population</div>
<div class="t" style="left:35.8px;top:448.1px;font-size:12px;color:#6a6a6a;letter-spacing:.08px">{F2010_Population}</div>
<div class="t" style="left:349px;top:439.8px;font-family:'Liberation Mono',monospace;font-size:12.500px;color:#323232;transform:scaleX(.665);transform-origin:0 0">int</div>
<div class="abs" style="left:36px;top:470.77px;width:348px;height:1px;background:#dcdcdc"></div>
<div class="abs" style="left:14px;top:491.57px;width:13px;height:13px;border:1px solid #8a8a8a;border-radius:2px;background:#fff"></div>
<div class="t" style="left:36.2px;top:481.87px;font-size:14px;color:#151515;letter-spacing:.05px">2015 Population</div>
<div class="t" style="left:35.8px;top:500.87px;font-size:12px;color:#6a6a6a;letter-spacing:.08px">{F2015_Population}</div>
<div class="t" style="left:349px;top:492.57px;font-family:'Liberation Mono',monospace;font-size:12.500px;color:#323232;transform:scaleX(.665);transform-origin:0 0">int</div>
<div class="abs" style="left:36px;top:523.54px;width:348px;height:1px;background:#dcdcdc"></div>
<div class="abs" style="left:14px;top:544.34px;width:13px;height:13px;border:1px solid #8a8a8a;border-radius:2px;background:#fff"></div>
<div class="t" style="left:36.2px;top:534.64px;font-size:14px;color:#151515;letter-spacing:.05px">2020 Population</div>
<div class="t" style="left:35.8px;top:553.64px;font-size:12px;color:#6a6a6a;letter-spacing:.08px">{F2020_Population}</div>
<div class="t" style="left:349px;top:545.34px;font-family:'Liberation Mono',monospace;font-size:12.500px;color:#323232;transform:scaleX(.665);transform-origin:0 0">int</div>
<div class="abs" style="left:36px;top:576.31px;width:348px;height:1px;background:#dcdcdc"></div>
<div class="abs" style="left:14px;top:597.11px;width:13px;height:13px;border:1px solid #8a8a8a;border-radius:2px;background:#fff"></div>
<div class="t" style="left:36.2px;top:587.41px;font-size:14px;color:#151515;letter-spacing:.05px">2022 Population</div>
<div class="t" style="left:35.8px;top:606.41px;font-size:12px;color:#6a6a6a;letter-spacing:.08px">{F2022_Population}</div>
<div class="t" style="left:349px;top:598.11px;font-family:'Liberation Mono',monospace;font-size:12.500px;color:#323232;transform:scaleX(.665);transform-origin:0 0">int</div>
<div class="abs" style="left:36px;top:629.08px;width:348px;height:1px;background:#dcdcdc"></div>
<div class="abs" style="left:14px;top:649.88px;width:13px;height:13px;border:1px solid #8a8a8a;border-radius:2px;background:#fff"></div>
<div class="t" style="left:36.2px;top:640.18px;font-size:14px;color:#151515;letter-spacing:.05px">Affiliated Country</div>
<div class="t" style="left:35.8px;top:659.18px;font-size:12px;color:#6a6a6a;letter-spacing:.08px">{COUNTRYAFF}</div>
<div class="t" style="left:349px;top:650.88px;font-family:'Liberation Mono',monospace;font-size:12.500px;color:#323232;transform:scaleX(.665);transform-origin:0 0">abc</div>
<div class="abs" style="left:36px;top:681.85px;width:348px;height:1px;background:#dcdcdc"></div>
<div class="abs" style="left:14px;top:702.65px;width:13px;height:13px;border:1px solid #8a8a8a;border-radius:2px;background:#fff"></div>
<div class="t" style="left:36.2px;top:692.95px;font-size:14px;color:#151515;letter-spacing:.05px">Area (km<span style="font-size:8.500px;position:relative;top:-8px;line-height:0;letter-spacing:0">2</span>)</div>
<div class="t" style="left:35.8px;top:711.95px;font-size:12px;color:#6a6a6a;letter-spacing:.08px">{Area__km__}</div>
<div class="t" style="left:349px;top:703.65px;font-family:'Liberation Mono',monospace;font-size:12.500px;color:#323232;transform:scaleX(.665);transform-origin:0 0">int</div>
<div class="abs" style="left:36px;top:734.62px;width:348px;height:1px;background:#dcdcdc"></div>
<div class="abs" style="left:14px;top:755.42px;width:13px;height:13px;border:1px solid #8a8a8a;border-radius:2px;background:#fff"></div>
<div class="t" style="left:36.2px;top:745.72px;font-size:14px;color:#151515;letter-spacing:.05px">Capital</div>
<div class="t" style="left:35.8px;top:764.72px;font-size:12px;color:#6a6a6a;letter-spacing:.08px">{Capital}</div>
<div class="t" style="left:349px;top:756.42px;font-family:'Liberation Mono',monospace;font-size:12.500px;color:#323232;transform:scaleX(.665);transform-origin:0 0">abc</div>
<div class="abs" style="left:36px;top:787.39px;width:348px;height:1px;background:#dcdcdc"></div>
<div class="abs" style="left:14px;top:808.19px;width:13px;height:13px;border:1px solid #8a8a8a;border-radius:2px;background:#fff"></div>
<div class="t" style="left:36.2px;top:798.49px;font-size:14px;color:#151515;letter-spacing:.05px">CCA3</div>
<div class="t" style="left:35.8px;top:817.49px;font-size:12px;color:#6a6a6a;letter-spacing:.08px">{CCA3}</div>
<div class="t" style="left:349px;top:809.19px;font-family:'Liberation Mono',monospace;font-size:12.500px;color:#323232;transform:scaleX(.665);transform-origin:0 0">abc</div>
<div class="abs" style="left:36px;top:840.16px;width:348px;height:1px;background:#dcdcdc"></div>
<div class="abs" style="left:14px;top:860.96px;width:13px;height:13px;border:1px solid #8a8a8a;border-radius:2px;background:#fff"></div>
<div class="t" style="left:36.2px;top:851.26px;font-size:14px;color:#151515;letter-spacing:.05px">Continent</div>
<div class="t" style="left:35.8px;top:870.26px;font-size:12px;color:#6a6a6a;letter-spacing:.08px">{CONTINENT}</div>
<div class="t" style="left:349px;top:861.96px;font-family:'Liberation Mono',monospace;font-size:12.500px;color:#323232;transform:scaleX(.665);transform-origin:0 0">abc</div>
<div class="abs" style="left:36px;top:892.93px;width:348px;height:1px;background:#dcdcdc"></div>
<div class="abs" style="left:148px;top:860.5px;width:88px;height:24px;border:1px solid #cacaca;border-radius:12px;background:#fff;box-shadow:0 2px 6px rgba(0,0,0,.12)"></div>
<svg class="abs" style="left:158.5px;top:868px" width="10" height="10" viewBox="0 0 10 10"><path d="M5 .5v9M.5 5h9" stroke="#323232" stroke-width="1" fill="none"/></svg>
<div class="t" style="left:179.3px;top:866.4px;font-size:12.500px;color:#323232;letter-spacing:.05px">Add field</div>
</div>
<div id="rrail">
<div class="abs" style="left:0px;top:288px;width:49px;height:48px;background:#eaeaea"></div>
<div class="abs" style="left:0;top:432px;width:49px;height:1px;background:#dcdcdc"></div>
<div class="abs" style="left:0;top:481px;width:49px;height:1px;background:#dcdcdc"></div>
<div class="abs" style="left:0;top:530px;width:49px;height:1px;background:#dcdcdc"></div>
<div class="abs" style="left:0;top:627px;width:49px;height:1px;background:#dcdcdc"></div>
<svg class="abs" style="left:16.5px;top:16.3px" width="16" height="16" viewBox="0 0 16 16" fill="none" stroke="#4a4a4a" stroke-width="1" stroke-linejoin="round"><path d="M0 3.500H16M0 8H16M0 12.500H16"/><rect x="11" y="1.300" width="2.200" height="4.400" fill="#fff"/><rect x="2.300" y="5.800" width="2.200" height="4.400" fill="#fff"/><rect x="6.800" y="10.300" width="2.200" height="4.400" fill="#fff"/></svg>
<svg class="abs" style="left:16.5px;top:64px" width="16" height="16" viewBox="0 0 16 16" fill="none" stroke="#4a4a4a" stroke-width="1" stroke-linejoin="round"><path d="M6.500 4.500h9v9h-3.500M.8 15.300L6.500 7l5.700 8.300z"/><path d="M3.200 8.200A4 4 0 1 1 9 4.500"/></svg>
<svg class="abs" style="left:16.5px;top:111.5px" width="16" height="16" viewBox="0 0 16 16" fill="none" stroke="#4a4a4a" stroke-width="1" stroke-linejoin="round"><path d="M.8 1.500h14.400L10 8.500V13c0 1.200-1 2-2 2s-2-.8-2-2V8.500z"/></svg>
<svg class="abs" style="left:16.5px;top:159px" width="16" height="16" viewBox="0 0 16 16" fill="none" stroke="#4a4a4a" stroke-width="1" stroke-linejoin="round"><path d="M.7 1.700h10.800v4M.7 1.700v10.800h8.300"/><path d="M4 1.700v10.800" /><rect x="9.500" y="6.500" width="6" height="4" fill="#4a4a4a"/><path d="M12.500 10.500v5" stroke-width="1.400"/><path d="M5 2.200v9.800h3.500V2.200z" fill="#d4d4d4" stroke="none"/></svg>
<svg class="abs" style="left:16.5px;top:207px" width="16" height="16" viewBox="0 0 16 16" fill="none" stroke="#4a4a4a" stroke-width="1" stroke-linejoin="round"><circle cx="7.500" cy="8.300" r="3.600" fill="#bfbfbf"/><path d="M4.700 5.500C3 4 2 2.500 3 1.700s3 .300 4 1.800M11 7c2-1 4-1.200 4.300-.2s-1 2.200-3 2.800M5 11.300c-1.500 1.700-2 3.400-1 4s2.600-.8 3.500-2.800"/></svg>
<svg class="abs" style="left:16.5px;top:255.5px" width="16" height="16" viewBox="0 0 16 16" fill="none" stroke="#4a4a4a" stroke-width="1" stroke-linejoin="round"><path d="M1 .8h14v11H9.500L8 14l-1.500-2.200H1z"/><circle cx="8" cy="6.300" r="1.500"/><path d="M8 2.800v1.200M8 8.600v1.200M4.500 6.300h1.200M10.300 6.300h1.200M5.500 3.800l.9.900M9.600 7.900l.9.900M10.500 3.800l-.9.900M6.400 7.900l-.9.900" stroke-width=".9"/></svg>
<svg class="abs" style="left:16.5px;top:303.8px" width="16" height="16" viewBox="0 0 16 16" fill="none" stroke="#151515" stroke-width="1.2" stroke-linejoin="round"><path d="M1 1.500h14M4.500 4.800h11M4.500 8.100h11"/><rect x=".8" y="11.500" width="14.800" height="3"/></svg>
<svg class="abs" style="left:16.5px;top:352px" width="16" height="16" viewBox="0 0 16 16" fill="none" stroke="#4a4a4a" stroke-width="1" stroke-linejoin="round"><path d="M2.200 10.200L10.500 2l5 1.500-1.500 5-8.300 8.300z" transform="translate(0,-1.500)"/><circle cx="5.500" cy="10.800" r="1.600"/><circle cx="5.500" cy="10.800" r=".5" fill="#4a4a4a"/><path d="M1 15c1 .6 2.300 0 3-1.200"/></svg>
<svg class="abs" style="left:16.5px;top:398.8px" width="16" height="16" viewBox="0 0 16 16" fill="none" stroke="#4a4a4a" stroke-width="1" stroke-linejoin="round"><path d="M.8 0v12.500h8M3 10.500V6.300h2.400v4.200zM7.700 10.500V1.300h2.400v6M12.300 3.500h2.400v4"/><circle cx="12.400" cy="12" r="1.300"/><path d="M11.800 8.500h1.200l.3 1 .9.400.9-.5.800.9-.5.900.4.900 1 .3v1.200l-1 .3-.4.900.5.900-.8.800-.9-.5-.9.400-.3 1h-1.200l-.3-1-.9-.4-.9.500-.8-.8.500-.9-.4-.9-1-.3v-1.200l1-.3.400-.9-.5-.9.800-.9.900.5.900-.4z" stroke-width=".8"/></svg>
<svg class="abs" style="left:16.5px;top:448px" width="16" height="16" viewBox="0 0 16 16" fill="none" stroke="#4a4a4a" stroke-width="1" stroke-linejoin="round"><path d="M.8 14.500l1.200-3.500L11.300 1.700l2.300 2.300L4.300 13.300zM2 11l2.300 2.300M10 3l2.300 2.300M.8 14.500h3"/><circle cx="12.200" cy="12.200" r="1.200"/><path d="M11.700 9h1.100l.3.900.8.400.9-.5.700.8-.5.900.4.800.9.300v1.100l-.9.300-.4.800.5.900-.7.700-.9-.5-.8.400-.3.900h-1.100l-.3-.9-.8-.4-.9.500-.7-.7.500-.9-.4-.8-.9-.3v-1.100l.9-.3.400-.8-.5-.9.700-.8.900.5.800-.4z" stroke-width=".8" fill="#fff"/></svg>
<svg class="abs" style="left:16.5px;top:498px" width="16" height="16" viewBox="0 0 16 16" fill="none" stroke="#4a4a4a" stroke-width="1" stroke-linejoin="round"><circle cx="8" cy="2.200" r="1.700"/><circle cx="3.200" cy="5.200" r="1.700"/><circle cx="12.800" cy="5.200" r="1.700"/><path d="M3.800 8.500h8.400l3 6.700H.8zM3 13l3.500-2 2 .8 4-2.300"/></svg>
<svg class="abs" style="left:16.5px;top:546.3px" width="16" height="16" viewBox="0 0 16 16" fill="none" stroke="#4a4a4a" stroke-width="1" stroke-linejoin="round"><path d="M9 1.500H1v13h12V8.500"/><path d="M4.800 14l1-3.200L13.500 3l2 2-7.700 7.800zM5.800 10.800l2 2M12.300 4.200l2 2"/></svg>
<svg class="abs" style="left:16.5px;top:594.5px" width="16" height="16" viewBox="0 0 16 16" fill="none" stroke="#4a4a4a" stroke-width="1" stroke-linejoin="round"><path d="M5 15l1-3.300L13.700 4l2 2-7.700 7.800zM6 11.700l2 2M12.500 5.200l2 2"/><path d="M5 15c-2.500.3-4.500-.6-4.200-2.300.4-2 2.600-3.200 3.200-6 .4-2-.4-3.700-1.800-3.200-1 .4-.5 2 .6 2.300"/></svg>
<svg class="abs" style="left:16.5px;top:643.8px" width="16" height="16" viewBox="0 0 16 16" fill="none" stroke="#4a4a4a" stroke-width="1" stroke-linejoin="round"><path d="M15.200 3.300l-2.700 2.700-1.900-.6-.6-1.900L12.700.8C11 .2 9.200.7 8.200 2.200c-.8 1.200-.8 2.600-.3 3.800L1.200 12.700c-.7.700-.7 1.700 0 2.300.7.700 1.700.7 2.300 0l6.700-6.700c1.200.5 2.600.4 3.700-.4 1.500-1 2-2.900 1.300-4.600z"/></svg>
<svg class="abs" style="left:19.5px;top:871.5px" width="12" height="9" viewBox="0 0 12 9" fill="none" stroke="#9f9f9f" stroke-width="1"><path d="M5.300.700L1.500 4.500l3.800 3.800M10.800.700L7 4.500l3.800 3.800"/></svg>
</div>
<!-- map widgets -->
<div id="mapui">
 <style>
 .mb{position:absolute;left:1440px;width:32px;height:32px;background:#fff;box-shadow:0 1px 2px rgba(0,0,0,.3)}
 .mb svg{position:absolute;left:8px;top:8px;width:16px;height:16px}
 </style>
 <div class="mb" style="top:695px"><svg viewBox="0 0 16 16" fill="none" stroke="#4a4a4a" stroke-width="1.100"><circle cx="6.200" cy="5.900" r="4.900"/><path d="M9.700 9.400l4.600 4.400"/></svg></div>
 <div class="mb" style="top:737px"><svg viewBox="0 0 16 16" fill="none" stroke="#4a4a4a" stroke-width="1"><path d="M3.500 11.500H.5V1.500h13.500v3.700M3.300 0v1.500M12.500 0v1.500M5.500.300h5"/><ellipse cx="9.500" cy="11.200" rx="6" ry="4.400" fill="#c4c4c4"/><path d="M3.500 11.200h12M9.500 6.800v8.800M6.300 7.600c1.200 2 1.200 5.200 0 7.200M12.700 7.600c-1.200 2-1.200 5.200 0 7.200" stroke-width=".9"/></svg></div>
 <div class="mb" style="top:779px"><svg viewBox="0 0 16 16" fill="none" stroke="#4a4a4a" stroke-width="1"><path d="M.7 1.500h14.600v10H.7zM8 11.500v2.500M5 14.200h6"/></svg></div>
 <div class="mb" style="top:821px"><svg viewBox="0 0 16 16" fill="none" stroke="#4a4a4a" stroke-width="1" stroke-linejoin="round"><path d="M1.200 8.300L8 1.300l2.800 2.900V2.300h2v4l2 2M3.200 7v8h3.600v-4.500h2.400V15h3.600V7"/></svg></div>
 <div class="mb" style="top:864px;height:64px"><svg viewBox="0 0 16 16" fill="none" stroke="#4a4a4a" stroke-width="1"><path d="M8 3.200v9.600M3.200 8h9.600"/></svg><svg viewBox="0 0 16 16" fill="none" stroke="#4a4a4a" stroke-width="1" style="top:40px"><path d="M3.200 8h9.600"/></svg><div class="abs" style="left:0;top:32px;width:32px;height:1px;background:#dcdcdc"></div></div>
 <!-- attribution -->
 <div class="abs" style="left:433px;top:942px;width:1054px;height:16px;background:rgba(255,255,255,.8)"></div>
 <div class="t" style="left:438.500px;top:943.500px;font-size:11.500px;color:#4c4c4c">Esri, USGS | Esri, TomTom, Garmin, FAO, NOAA, USGS, EPA</div>
 <div class="t" style="left:1395.500px;top:943.500px;font-size:11.800px;color:#4c4c4c">Powered by <span style="text-decoration:underline">Esri</span></div>
</div>
<!-- column menu -->
<div id="menu" class="abs" style="left:1274px;top:530px;width:157px;height:140px;background:#fff;border-radius:4px;box-shadow:0 4px 12px rgba(0,0,0,.16),0 0 3px rgba(0,0,0,.1)">
 <svg class="abs" style="left:12px;top:10px" width="16" height="16" viewBox="0 0 16 16" fill="none" stroke="#4a4a4a" stroke-width="1"><path d="M3.500 15V6M.8 8.700L3.500 6l2.700 2.700M8 2.500h8M10 6.500H16M11.500 10.500h4.500M13 14.500h3"/></svg>
 <div class="t" style="left:40.200px;top:11px;font-size:14px;color:#6a6a6a;letter-spacing:.12px">Sort ascending</div>
 <svg class="abs" style="left:12px;top:46px" width="16" height="16" viewBox="0 0 16 16" fill="none" stroke="#4a4a4a" stroke-width="1"><path d="M3.500 6v9M.8 12.300L3.500 15l2.700-2.700M8 2.500h8M10 6.500H16M11.500 10.500h4.500M13 14.500h3"/></svg>
 <div class="t" style="left:40.200px;top:46.600px;font-size:14px;color:#6a6a6a;letter-spacing:.2px">Sort descending</div>
 <div class="abs" style="left:0;top:72px;width:157px;height:1px;background:#dcdcdc"></div>
 <svg class="abs" style="left:12px;top:83px" width="16" height="16" viewBox="0 0 16 16" fill="none" stroke="#4a4a4a" stroke-width="1"><circle cx="8" cy="8" r="7.200"/><path d="M8.200 7v4.500M6.800 7h1.400M6.500 11.500h3.300" stroke-width=".9"/><circle cx="8" cy="4.700" r=".7" fill="#4a4a4a" stroke="none"/></svg>
 <div class="t" style="left:40.200px;top:83.500px;font-size:14px;color:#6a6a6a;letter-spacing:.15px">Information</div>
 <svg class="abs" style="left:12px;top:119px" width="16" height="16" viewBox="0 0 16 16" fill="none" stroke="#4a4a4a" stroke-width="1"><rect x=".5" y=".5" width="15" height="15" rx="1"/><path d="M2.500 2.500h11v3h-11z"/><circle cx="3.900" cy="9.300" r=".85" stroke-width=".7"/><circle cx="7.300" cy="9.300" r=".85" stroke-width=".7"/><circle cx="3.900" cy="12.700" r=".85" stroke-width=".7"/><circle cx="7.300" cy="12.700" r=".85" stroke-width=".7"/><rect x="10.400" y="8.300" width="2.800" height="5.200" rx="1" stroke-width=".9"/></svg>
 <div class="t" style="left:40.500px;top:119.600px;font-size:14px;color:#6a6a6a;letter-spacing:.15px">Calculate field</div>
</div>
<!-- annotations -->
<svg class="abs" style="left:0;top:0;pointer-events:none" width="1920" height="958" viewBox="0 0 1920 958">
 <defs><filter id="ash" x="-20%" y="-20%" width="140%" height="150%"><feDropShadow dx="0" dy="2" stdDeviation="2.500" flood-color="#000" flood-opacity=".35"/></filter></defs>
 <rect x="1317.600" y="498.600" width="67.700" height="29.700" rx="7.500" fill="none" stroke="#62bf47" stroke-width="5"/>
 <rect x="1256.600" y="635.300" width="188" height="46.100" rx="15.500" fill="none" stroke="#62bf47" stroke-width="5"/>
 <g fill="#1a9af2" filter="url(#ash)">
  <path d="M1266.900 441.300L1279.100 432.500 1299.500 458.800 1311.100 451.100 1319.500 499.500 1275.700 477.400 1286.700 468.200z"/>
  <path d="M1258.600 675.600L1211 690.100 1221.600 700.800 1156 763.400 1166.300 774.100 1231.800 711.400 1242.100 722.100z"/>
 </g>
</svg>
</body></html>
